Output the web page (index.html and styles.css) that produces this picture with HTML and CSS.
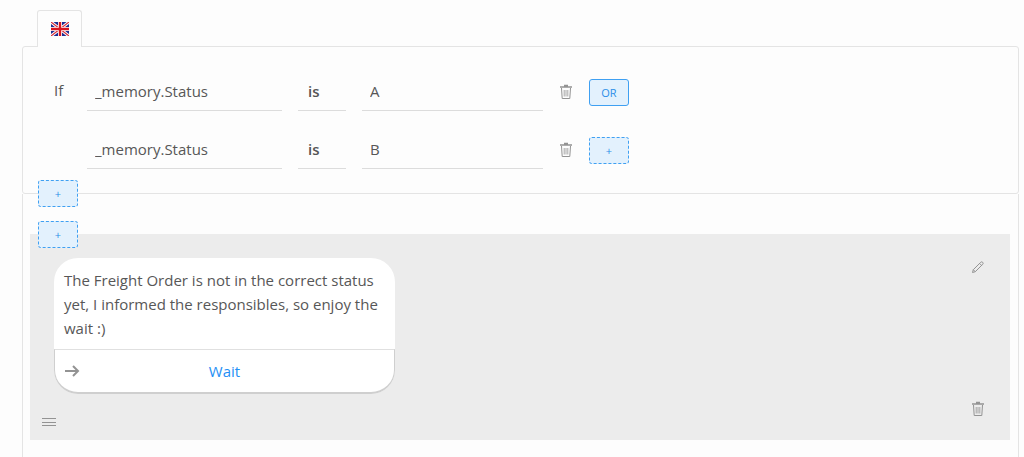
FILE: index.html
```html
<!DOCTYPE html>
<html lang="en">
<head>
    <meta charset="UTF-8">
    <meta name="viewport" content="width=device-width, initial-scale=1.0">
    <title>Message Condition</title>
    <link rel="stylesheet" href="styles.css">
</head>
<body>

<svg class="sprite" aria-hidden="true">
    <symbol id="trash" viewBox="0 0 14 16">
        <path d="M5 1.5h4M1 3h12" stroke-width="1.6"/>
        <path d="M2.5 4l.7 10.5h7.6l.7-10.5"/>
        <path d="M5.2 6v6.5M7 6v6.5M8.8 6v6.5" stroke-width=".8"/>
    </symbol>
</svg>

<div class="builder">
    <button type="button" class="tab" aria-label="English">
        <svg class="flag" viewBox="0 0 18 14">
            <rect width="18" height="14" fill="#1c2c92"/>
            <path d="M0 0l18 14M18 0L0 14" stroke="#fff" stroke-width="3"/>
            <path d="M0 0l18 14M18 0L0 14" stroke="#d8303c" stroke-width="1.2"/>
            <path d="M9 0v14M0 7h18" stroke="#fff" stroke-width="4"/>
            <path d="M9 0v14M0 7h18" stroke="#d8141f" stroke-width="2.4"/>
        </svg>
    </button>

    <form class="conditions">
        <div class="condition">
            <span class="if">If</span>
            <input class="field name" type="text" value="_memory.Status" aria-label="Variable 1">
            <select class="field operator" aria-label="Operator 1">
                <option>is</option>
            </select>
            <input class="field value" type="text" value="A" aria-label="Value 1">
            <button type="button" class="icon-btn" aria-label="Delete condition 1">
                <svg class="icon trash"><use href="#trash"/></svg>
            </button>
            <button type="button" class="chip solid">OR</button>
        </div>
        <div class="condition">
            <span class="if"></span>
            <input class="field name" type="text" value="_memory.Status" aria-label="Variable 2">
            <select class="field operator" aria-label="Operator 2">
                <option>is</option>
            </select>
            <input class="field value" type="text" value="B" aria-label="Value 2">
            <button type="button" class="icon-btn" aria-label="Delete condition 2">
                <svg class="icon trash"><use href="#trash"/></svg>
            </button>
            <button type="button" class="chip" aria-label="Add condition">+</button>
        </div>
        <button type="button" class="chip on-edge bottom" aria-label="Add condition group">+</button>
    </form>

    <div class="messages">
        <div class="message">
            <button type="button" class="chip on-edge top" aria-label="Add message">+</button>
            <div class="message-main">
                <div class="bubble">
                    <p class="bubble-text">The Freight Order is not in the correct status yet, I informed the responsibles, so enjoy the wait :)</p>
                    <a class="bubble-action" href="#">
                        <svg class="icon arrow" viewBox="0 0 16 12">
                            <path d="M0 6h13M8 1l5 5-5 5"/>
                        </svg>
                        <span>Wait</span>
                    </a>
                </div>
                <button type="button" class="icon-btn drag" aria-label="Move message">
                    <svg class="icon handle" viewBox="0 0 14 10">
                        <path d="M0 1.5h14M0 5.5h14M0 8.5h14"/>
                    </svg>
                </button>
            </div>
            <div class="message-tools">
                <button type="button" class="icon-btn" aria-label="Edit message">
                    <svg class="icon pencil" viewBox="0 0 14 14">
                        <path d="M1.5 12.5l.8-2.8 7.4-7.4q1-1 2 0t0 2l-7.4 7.4zM2.3 9.7l2 2M8.6 3.4l2 2"/>
                    </svg>
                </button>
                <button type="button" class="icon-btn" aria-label="Delete message">
                    <svg class="icon trash"><use href="#trash"/></svg>
                </button>
            </div>
        </div>
    </div>
</div>

</body>
</html>
```

FILE: styles.css
```css
* {
    box-sizing: border-box;
}
body {
    font-family: "Open Sans", "Noto Sans", sans-serif;
    font-size: 15px;
    background-color: #fdfdfd;
    color: #575757;
    margin: 0;
}
button, input, select {
    font: inherit;
    color: inherit;
    margin: 0;
}
button {
    cursor: pointer;
}
.sprite {
    position: absolute;
    width: 0;
    height: 0;
}
.builder {
    display: flex;
    flex-direction: column;
    min-height: 100vh;
    padding: 10px 5px 0 22px;
}
.tab {
    position: relative;
    z-index: 1;
    display: flex;
    align-items: center;
    justify-content: center;
    align-self: flex-start;
    width: 45px;
    height: 37px;
    margin: 0 0 -1px 15px;
    padding: 0;
    background-color: #fdfdfd;
    border: 1px solid #e4e4e4;
    border-bottom: 0;
    border-radius: 3px 3px 0 0;
}
.flag {
    width: 18px;
    height: 14px;
}
.conditions {
    position: relative;
    display: flex;
    flex-direction: column;
    gap: 16px;
    padding: 22px 31px 24px;
    border: 1px solid #e4e4e4;
    border-radius: 3px;
}
.condition {
    display: flex;
    align-items: center;
    gap: 16px;
}
.condition button {
    margin-top: 4px;
}
.if {
    width: 17px;
}
.field {
    height: 42px;
    padding: 2px 8px 0;
    border: 0;
    border-bottom: 1px solid #dcdcdc;
    border-radius: 0;
    background: none;
    outline: none;
}
.name {
    width: 195px;
}
.operator {
    width: 48px;
    padding-left: 10px;
    appearance: none;
    font-weight: 600;
    color: #555;
}
.value {
    width: 181px;
}
.icon-btn {
    display: flex;
    padding: 0;
    border: 0;
    background: none;
}
.icon {
    fill: none;
    stroke: #939393;
    stroke-width: 1;
}
.trash {
    width: 14px;
    height: 16px;
}
.chip {
    width: 40px;
    height: 27px;
    padding: 0;
    font-size: 11px;
    color: #2b8fe8;
    background-color: #e3f1fd;
    border: 1px dashed #3fa0f2;
    border-radius: 3px;
}
.chip.solid {
    border-style: solid;
}
.on-edge {
    position: absolute;
}
.on-edge.bottom {
    left: 15px;
    bottom: -14px;
}
.on-edge.top {
    left: 8px;
    top: -13px;
}
.messages {
    flex: 1;
    padding: 40px 8px 17px 7px;
    border: 1px solid #e4e4e4;
    border-width: 0 1px;
}
.message {
    position: relative;
    display: flex;
    justify-content: space-between;
    background-color: #ececec;
}
.message-main {
    display: flex;
    flex-direction: column;
    align-items: flex-start;
    padding: 24px 0 13px 12px;
}
.bubble {
    max-width: 341px;
    margin-left: 12px;
    background-color: #fff;
    border-radius: 24px;
}
.bubble-text {
    margin: 0;
    padding: 10px 10px 9px;
    line-height: 24px;
}
.bubble-action {
    display: flex;
    align-items: center;
    height: 45px;
    padding: 0 10px;
    color: #1f8ff5;
    text-decoration: none;
    border: 1px solid #cfcfcf;
    border-top-color: #e0e0e0;
    border-bottom-width: 2px;
    border-radius: 0 0 24px 24px;
}
.bubble-action span {
    flex: 1;
    padding-right: 16px;
    text-align: center;
}
.arrow {
    width: 16px;
    height: 12px;
    stroke-width: 2;
}
.drag {
    margin-top: 23px;
}
.handle {
    width: 14px;
    height: 10px;
}
.message-tools {
    display: flex;
    flex-direction: column;
    justify-content: space-between;
    padding: 26px 25px 23px;
}
.pencil {
    width: 14px;
    height: 14px;
}
```
